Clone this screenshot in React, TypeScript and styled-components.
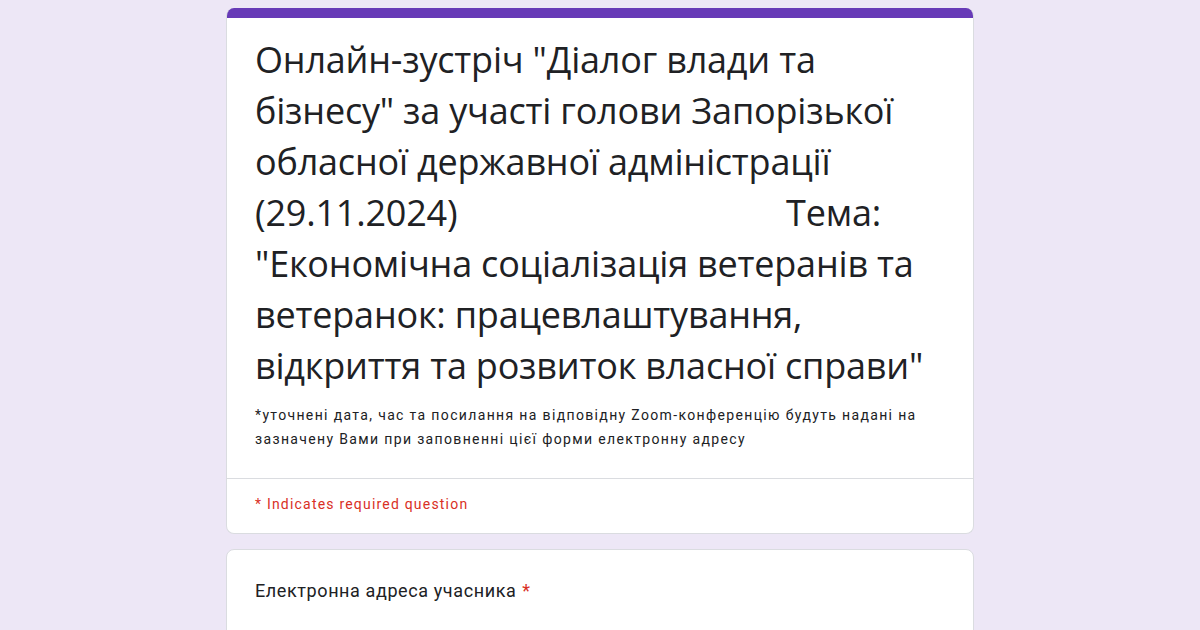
import React from 'react';
import styled, {createGlobalStyle} from 'styled-components';

const GlobalStyle = createGlobalStyle`
  html, body {
    margin: 0;
    padding: 0;
    background: #ede7f6;
  }
  body {
    font-family: Roboto, 'Liberation Sans', Arial, sans-serif;
    color: #202124;
  }
`;

const Page = styled.div`
  display: flex;
  flex-direction: column;
  align-items: center;
  gap: 15px;
  padding-top: 8px;
  height: 630px;
  overflow: hidden;
  box-sizing: border-box;
`;

const Card = styled.div`
  width: 748px;
  box-sizing: border-box;
  background: #fff;
  border: 1px solid #dadce0;
  border-radius: 8px;
  overflow: hidden;
  flex-shrink: 0;
`;

const HeaderCard = styled(Card)`
  border-top: none;
`;

const TopBar = styled.div`
  height: 10px;
  background: #673ab7;
  margin: 0 -1px;
`;

const HeaderBody = styled.div`
  padding: 16px 28px 27px;
`;

const Title = styled.h1`
  margin: 0;
  font-family: 'Open Sans', Roboto, sans-serif;
  font-weight: 400;
  font-size: 36px;
  line-height: 51px;
  letter-spacing: -0.2px;
  color: #202124;
`;

const TitleLine = styled.div<{$split?: boolean}>`
  white-space: nowrap;
  display: flex;
  justify-content: ${p => (p.$split ? 'space-between' : 'flex-start')};
  padding-right: ${p => (p.$split ? '64px' : '0')};
`;

const Description = styled.p`
  margin: 12px 0 0;
  font-size: 14px;
  line-height: 24px;
  letter-spacing: 1.35px;
  color: #202124;
`;

const Divider = styled.div`
  border-top: 1px solid #dadce0;
`;

const Required = styled.div`
  padding: 15px 28px 19px;
  font-size: 14px;
  line-height: 20px;
  letter-spacing: 1.2px;
  color: #d93025;
`;

const QuestionBody = styled.div`
  padding: 28px 28px 40px;
`;

const QuestionTitle = styled.div`
  font-size: 18px;
  line-height: 26px;
  letter-spacing: 0.6px;
  color: #202124;
`;

const Star = styled.span`
  color: #d93025;
  margin-left: 6px;
`;

const titleLines = [
  'Онлайн-зустріч "Діалог влади та',
  'бізнесу" за участі голови Запорізької',
  'обласної державної адміністрації',
];

const titleTail = [
  '"Економічна соціалізація ветеранів та',
  'ветеранок: працевлаштування,',
  'відкриття та розвиток власної справи"',
];

export default function App() {
  return (
    <>
      <GlobalStyle />
      <Page>
        <HeaderCard>
          <TopBar />
          <HeaderBody>
            <Title>
              {titleLines.map(l => (
                <TitleLine key={l}>{l}</TitleLine>
              ))}
              <TitleLine $split>
                <span>(29.11.2024)</span>
                <span>Тема:</span>
              </TitleLine>
              {titleTail.map(l => (
                <TitleLine key={l}>{l}</TitleLine>
              ))}
            </Title>
            <Description>
              *уточнені дата, час та посилання на відповідну Zoom-конференцію будуть надані на
              <br />
              зазначену Вами при заповненні цієї форми електронну адресу
            </Description>
          </HeaderBody>
          <Divider />
          <Required>* Indicates required question</Required>
        </HeaderCard>
        <Card>
          <QuestionBody>
            <QuestionTitle>
              Електронна адреса учасника<Star>*</Star>
            </QuestionTitle>
          </QuestionBody>
        </Card>
      </Page>
    </>
  );
}
